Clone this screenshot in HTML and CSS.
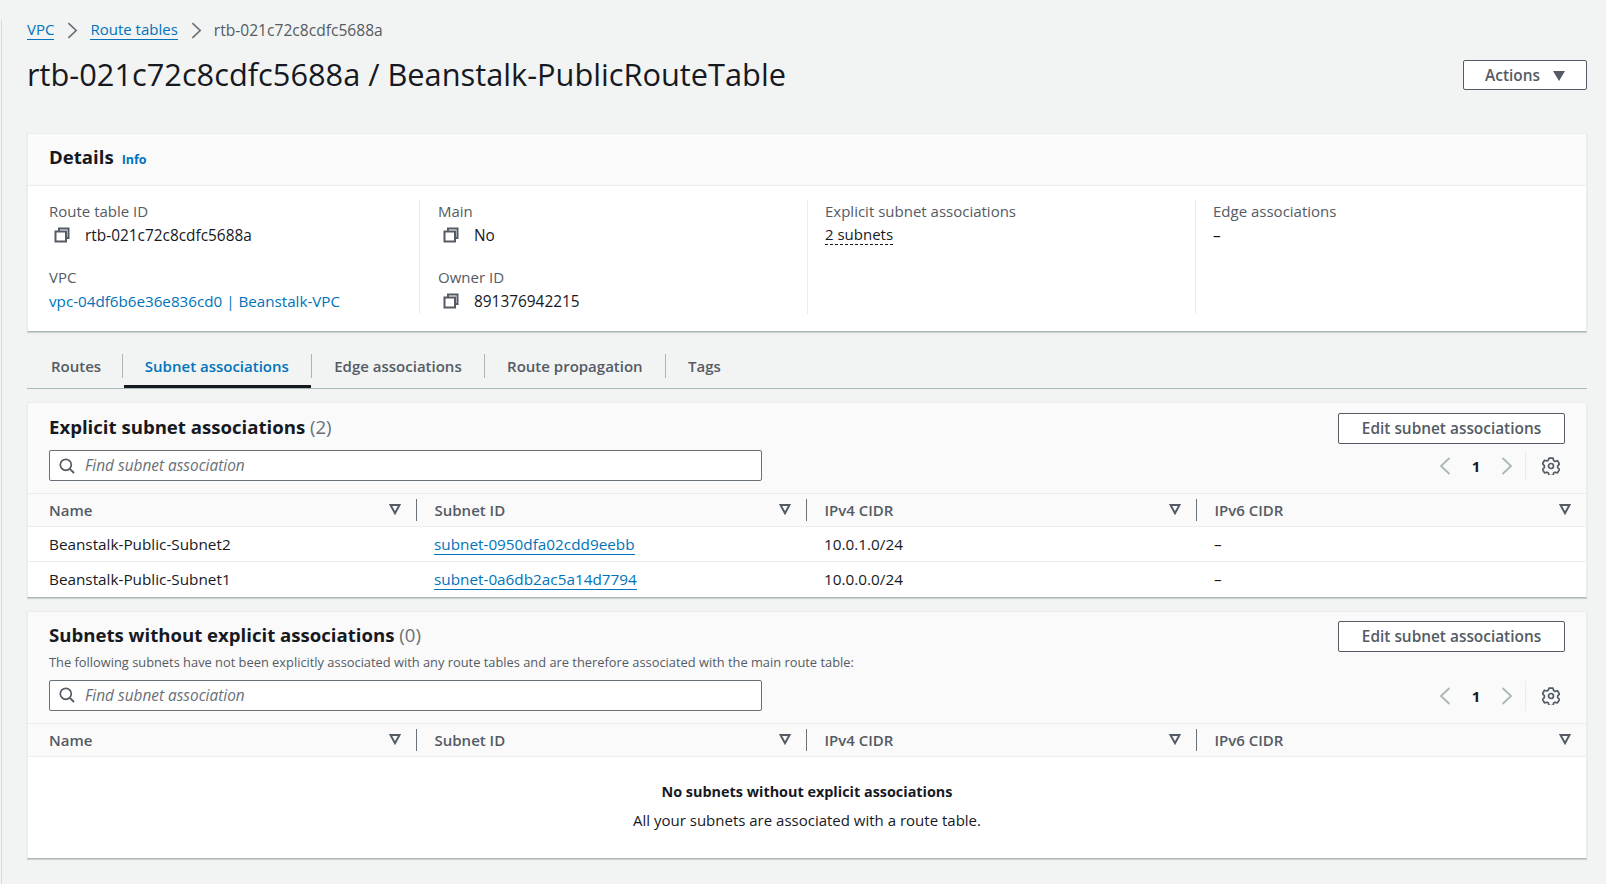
FILE: index.html
```html
<!DOCTYPE html>
<html lang="en">
<head>
  <meta charset="UTF-8" />
  <meta name="viewport" content="width=device-width, initial-scale=1.0"/>
  <title>Route table</title>
  <link rel="stylesheet" href="styles.css">
</head>
<body>
  <svg class="icon-defs" width="0" height="0">
    <symbol id="i-copy" viewBox="0 0 16 16">
      <path d="M5 4V1.500h9.500V11H12M1.500 4.500H12V14.500H1.500z" fill="none" stroke="currentColor" stroke-width="2"/>
    </symbol>
    <symbol id="i-search" viewBox="0 0 16 16">
      <circle cx="6.800" cy="6.800" r="5.500" fill="none" stroke="currentColor" stroke-width="1.700"/>
      <path d="M10.800 10.800 15 15" fill="none" stroke="currentColor" stroke-width="1.900"/>
    </symbol>
    <symbol id="i-sort" viewBox="0 0 12 12">
      <path d="M1.500 2h9L6 10.200z" fill="none" stroke="currentColor" stroke-width="2"/>
    </symbol>
    <symbol id="i-prev" viewBox="0 0 12 18">
      <path d="M10.500 1 2 9l8.500 8" fill="none" stroke="currentColor" stroke-width="1.800"/>
    </symbol>
    <symbol id="i-next" viewBox="0 0 12 18">
      <path d="M1.500 1 10 9l-8.500 8" fill="none" stroke="currentColor" stroke-width="1.800"/>
    </symbol>
    <symbol id="i-gear" viewBox="0 0 18 18">
      <path d="M7 1.200h4l.6 2.400 1.500.9 2.400-.7 2 3.400-1.800 1.800v1.800l1.800 1.800-2 3.400-2.400-.7-1.500.9-.6 2.400H7l-.6-2.400-1.500-.9-2.400.7-2-3.400 1.800-1.800V8.600L.5 6.800l2-3.400 2.400.7 1.500-.9z" transform="translate(0 -.1)" fill="none" stroke="currentColor" stroke-width="1.700" stroke-linejoin="round"/>
      <circle cx="9" cy="9" r="2.500" fill="none" stroke="currentColor" stroke-width="1.700"/>
    </symbol>
  </svg>

  <div class="page">
    <nav class="breadcrumb">
      <a href="#">VPC</a>
      <svg class="crumb-sep"><use href="#i-next"/></svg>
      <a href="#">Route tables</a>
      <svg class="crumb-sep"><use href="#i-next"/></svg>
      <span>rtb-021c72c8cdfc5688a</span>
    </nav>

    <header class="page-head">
      <h1>rtb-021c72c8cdfc5688a / Beanstalk-PublicRouteTable</h1>
      <button class="btn btn-actions">Actions <span class="caret"></span></button>
    </header>

    <section class="card details">
      <div class="details-head">
        <h2>Details</h2>
        <a class="info" href="#">Info</a>
      </div>
      <div class="details-grid">
        <div class="details-col">
          <div class="field">
            <div class="label">Route table ID</div>
            <div class="value"><svg class="copy"><use href="#i-copy"/></svg>rtb-021c72c8cdfc5688a</div>
          </div>
          <div class="field">
            <div class="label">VPC</div>
            <div class="value"><a class="vpc-link" href="#">vpc-04df6b6e36e836cd0 | Beanstalk-VPC</a></div>
          </div>
        </div>
        <div class="details-col">
          <div class="field">
            <div class="label">Main</div>
            <div class="value"><svg class="copy"><use href="#i-copy"/></svg>No</div>
          </div>
          <div class="field">
            <div class="label">Owner ID</div>
            <div class="value"><svg class="copy"><use href="#i-copy"/></svg>891376942215</div>
          </div>
        </div>
        <div class="details-col narrow">
          <div class="field">
            <div class="label">Explicit subnet associations</div>
            <div class="value"><span class="dotted">2 subnets</span></div>
          </div>
        </div>
        <div class="details-col narrow">
          <div class="field">
            <div class="label">Edge associations</div>
            <div class="value">–</div>
          </div>
        </div>
      </div>
    </section>

    <div class="tabs">
      <a class="tab" href="#">Routes</a>
      <a class="tab active" href="#">Subnet associations</a>
      <a class="tab" href="#">Edge associations</a>
      <a class="tab" href="#">Route propagation</a>
      <a class="tab" href="#">Tags</a>
    </div>

    <section class="card assoc">
      <div class="assoc-head">
        <div class="assoc-main">
          <h2>Explicit subnet associations <span class="count">(2)</span></h2>
          <div class="search">
            <svg class="search-icon"><use href="#i-search"/></svg>
            <span>Find subnet association</span>
          </div>
        </div>
        <div class="assoc-tools">
          <button class="btn">Edit subnet associations</button>
          <div class="pager">
            <svg class="pager-arrow"><use href="#i-prev"/></svg>
            <b>1</b>
            <svg class="pager-arrow"><use href="#i-next"/></svg>
            <span class="pager-gear"><svg><use href="#i-gear"/></svg></span>
          </div>
        </div>
      </div>
      <table>
        <thead>
          <tr>
            <th><div>Name<svg class="sort"><use href="#i-sort"/></svg></div></th>
            <th><div>Subnet ID<svg class="sort"><use href="#i-sort"/></svg></div></th>
            <th><div>IPv4 CIDR<svg class="sort"><use href="#i-sort"/></svg></div></th>
            <th><div>IPv6 CIDR<svg class="sort"><use href="#i-sort"/></svg></div></th>
          </tr>
        </thead>
        <tbody>
          <tr>
            <td>Beanstalk-Public-Subnet2</td>
            <td><a href="#">subnet-0950dfa02cdd9eebb</a></td>
            <td>10.0.1.0/24</td>
            <td>–</td>
          </tr>
          <tr>
            <td>Beanstalk-Public-Subnet1</td>
            <td><a href="#">subnet-0a6db2ac5a14d7794</a></td>
            <td>10.0.0.0/24</td>
            <td>–</td>
          </tr>
        </tbody>
      </table>
    </section>

    <section class="card assoc assoc-empty">
      <div class="assoc-head">
        <div class="assoc-main">
          <h2>Subnets without explicit associations <span class="count">(0)</span></h2>
          <p class="assoc-desc">The following subnets have not been explicitly associated with any route tables and are therefore associated with the main route table:</p>
          <div class="search">
            <svg class="search-icon"><use href="#i-search"/></svg>
            <span>Find subnet association</span>
          </div>
        </div>
        <div class="assoc-tools">
          <button class="btn">Edit subnet associations</button>
          <div class="pager">
            <svg class="pager-arrow"><use href="#i-prev"/></svg>
            <b>1</b>
            <svg class="pager-arrow"><use href="#i-next"/></svg>
            <span class="pager-gear"><svg><use href="#i-gear"/></svg></span>
          </div>
        </div>
      </div>
      <table>
        <thead>
          <tr>
            <th><div>Name<svg class="sort"><use href="#i-sort"/></svg></div></th>
            <th><div>Subnet ID<svg class="sort"><use href="#i-sort"/></svg></div></th>
            <th><div>IPv4 CIDR<svg class="sort"><use href="#i-sort"/></svg></div></th>
            <th><div>IPv6 CIDR<svg class="sort"><use href="#i-sort"/></svg></div></th>
          </tr>
        </thead>
      </table>
      <div class="empty">
        <strong>No subnets without explicit associations</strong>
        <p>All your subnets are associated with a route table.</p>
      </div>
    </section>
  </div>
</body>
</html>
```

FILE: styles.css
```css
* {
  box-sizing: border-box;
}
html, body {
  margin: 0;
  height: 100%;
}
body {
  font-family: "Open Sans", "Noto Sans", sans-serif;
  font-size: 15px;
  color: #16191f;
  background: #f2f3f3;
  overflow: hidden;
}
a {
  color: #0073bb;
  text-decoration: none;
}
.icon-defs {
  display: block;
  height: 0;
}
.page {
  height: 884px;
  margin-left: 1px;
  border-left: 1px solid #d5dbdb;
  padding: 0 19px 0 25px;
}

/* breadcrumb + title */
.breadcrumb {
  display: flex;
  align-items: center;
  height: 20px;
  margin-top: 20px;
  font-size: 15.600px;
  font-weight: 500;
  color: #545b64;
}
.breadcrumb a {
  font-size: 15px;
  font-weight: 400;
  border-bottom: 1px solid #0073bb;
  line-height: 19px;
}
.crumb-sep {
  width: 11px;
  height: 17px;
  margin: 0 12px 0 13px;
  color: #687078;
}
.page-head {
  display: flex;
  justify-content: space-between;
  align-items: flex-start;
  height: 36px;
  margin-top: 16px;
  margin-bottom: 41px;
}
h1 {
  margin: 0;
  font-size: 30.750px;
  font-weight: 400;
  line-height: 36px;
}
.btn {
  height: 31px;
  padding: 0 22px;
  font: 600 15.400px "Open Sans", "Noto Sans", sans-serif;
  color: #545b64;
  background: #fff;
  border: 1px solid #545b64;
  border-radius: 2px;
}
.btn-actions {
  width: 124px;
  height: 30px;
  margin-top: 4px;
  padding: 0;
}
.caret {
  display: inline-block;
  width: 0;
  height: 0;
  margin-left: 9px;
  border-left: 6px solid transparent;
  border-right: 6px solid transparent;
  border-top: 10px solid #545b64;
}

/* cards */
.card {
  background: #fff;
  border: 1px solid #eaeded;
  border-bottom: 1px solid #aab7b8;
  box-shadow: 0 1px 1px rgba(0, 28, 36, .15);
}
h2 {
  margin: 0;
  font-size: 18.600px;
  font-weight: 700;
  line-height: 24px;
}
.details {
  height: 199px;
}
.details-head {
  display: flex;
  align-items: center;
  gap: 8px;
  height: 52px;
  padding-left: 21px;
  background: #fafafa;
  border-bottom: 1px solid #eaeded;
}
.details-head h2 {
  margin-bottom: 5px;
}
.info {
  font-size: 12.500px;
  font-weight: 700;
}
.details-grid {
  display: grid;
  grid-template-columns: 391px 388px 388px 1fr;
  padding-top: 14px;
}
.details-col {
  height: 114px;
  padding-left: 18px;
  border-left: 1px solid #eaeded;
}
.details-col.narrow {
  padding-left: 17px;
}
.details-col:first-child {
  padding-left: 21px;
  border-left: 0;
}
.field {
  height: 66px;
}
.label {
  height: 23px;
  line-height: 23px;
  color: #545b64;
}
.value {
  display: flex;
  align-items: center;
  height: 24px;
  font-size: 15.400px;
}
.vpc-link {
  font-size: 15.200px;
}
.copy {
  width: 16px;
  height: 16px;
  margin: 0 15px 0 5px;
  color: #545b64;
}
.dotted {
  font-size: 15px;
  border-bottom: 1px dashed #16191f;
  line-height: 19px;
}

/* tabs */
.tabs {
  display: flex;
  align-items: stretch;
  height: 39px;
  margin-top: 18px;
  margin-bottom: 13px;
  padding-bottom: 1px;
  border-bottom: 1px solid #aab7b8;
}
.tab {
  position: relative;
  padding: 0 22.200px;
  margin: 4px 0 0;
  height: 24px;
  line-height: 25px;
  font-weight: 600;
  color: #545b64;
  border-left: 1px solid #aab7b8;
  box-sizing: content-box;
}
.tab:first-child {
  padding: 0 20.500px 0 24px;
  border-left: 0;
}
.tab.active {
  color: #0073bb;
}
.tab.active::after {
  content: "";
  position: absolute;
  left: 1px;
  right: 0;
  bottom: -10px;
  height: 3px;
  background: #16191f;
}

/* association cards */
.assoc {
  margin-bottom: 13px;
}
.assoc-head {
  display: flex;
  justify-content: space-between;
  padding: 0 21px;
  background: #fafafa;
}
.assoc-main {
  width: 713px;
  padding-top: 12px;
  padding-bottom: 12px;
}
.assoc-empty .assoc-main {
  padding-top: 11px;
  padding-bottom: 12px;
}
.count {
  font-weight: 400;
  color: #687078;
}
.assoc-desc {
  margin: 6px 0 9px;
  font-size: 12.850px;
  line-height: 18px;
  color: #545b64;
  white-space: nowrap;
}
.search {
  display: flex;
  align-items: center;
  height: 31px;
  margin-top: 11px;
  padding-left: 9px;
  font-size: 15.400px;
  font-style: italic;
  color: #687078;
  background: #fff;
  border: 1px solid #687078;
  border-radius: 2px;
}
.assoc-desc + .search {
  margin-top: 0;
}
.search-icon {
  width: 16px;
  height: 16px;
  margin-right: 10px;
  color: #545b64;
}
.assoc-tools {
  display: flex;
  flex-direction: column;
  align-items: flex-end;
  padding-top: 10px;
}
.assoc-empty .assoc-tools {
  padding-top: 9px;
}
.assoc-tools .btn {
  width: 227px;
  padding: 0;
}
.pager {
  display: flex;
  align-items: center;
  height: 30px;
  margin-top: 7px;
  color: #aab7b8;
}
.assoc-empty .pager {
  margin-top: 29px;
}
.pager b {
  width: 50px;
  text-align: center;
  font-weight: 700;
  color: #16191f;
}
.pager-arrow {
  width: 12px;
  height: 18px;
}
.pager-gear {
  display: flex;
  align-items: center;
  height: 30px;
  margin-left: 12px;
  padding: 0 5px 0 16px;
  border-left: 1px solid #eaeded;
  color: #545b64;
}
.pager-gear svg {
  width: 18px;
  height: 18px;
}

/* tables */
table {
  width: 100%;
  table-layout: fixed;
  border-collapse: collapse;
}
th {
  height: 33px;
  padding: 0;
  background: #fafafa;
  border-top: 1px solid #eaeded;
  border-bottom: 1px solid #eaeded;
  text-align: left;
  font-weight: 600;
  color: #545b64;
}
th:first-child {
  width: 388px;
}
th div {
  display: flex;
  justify-content: space-between;
  align-items: center;
  height: 22px;
  padding: 0 15px 0 17.500px;
  border-left: 1px solid #687078;
}
th:first-child div {
  padding-left: 21px;
  border-left: 0;
}
.sort {
  width: 12px;
  height: 12px;
  margin-bottom: 2px;
  color: #545b64;
}
td {
  height: 35px;
  padding: 0 0 0 18px;
  font-size: 15.300px;
  border-bottom: 1px solid #eaeded;
}
td:first-child {
  padding-left: 21px;
}
tr:last-child td {
  border-bottom: 0;
}
td a {
  border-bottom: 1px solid #0073bb;
}

.empty {
  height: 101px;
  padding-top: 25px;
  text-align: center;
}
.empty strong {
  display: block;
  font-size: 14.400px;
  line-height: 20px;
  font-weight: 700;
}
.empty p {
  margin: 8px 0 0;
  line-height: 20px;
}
```
